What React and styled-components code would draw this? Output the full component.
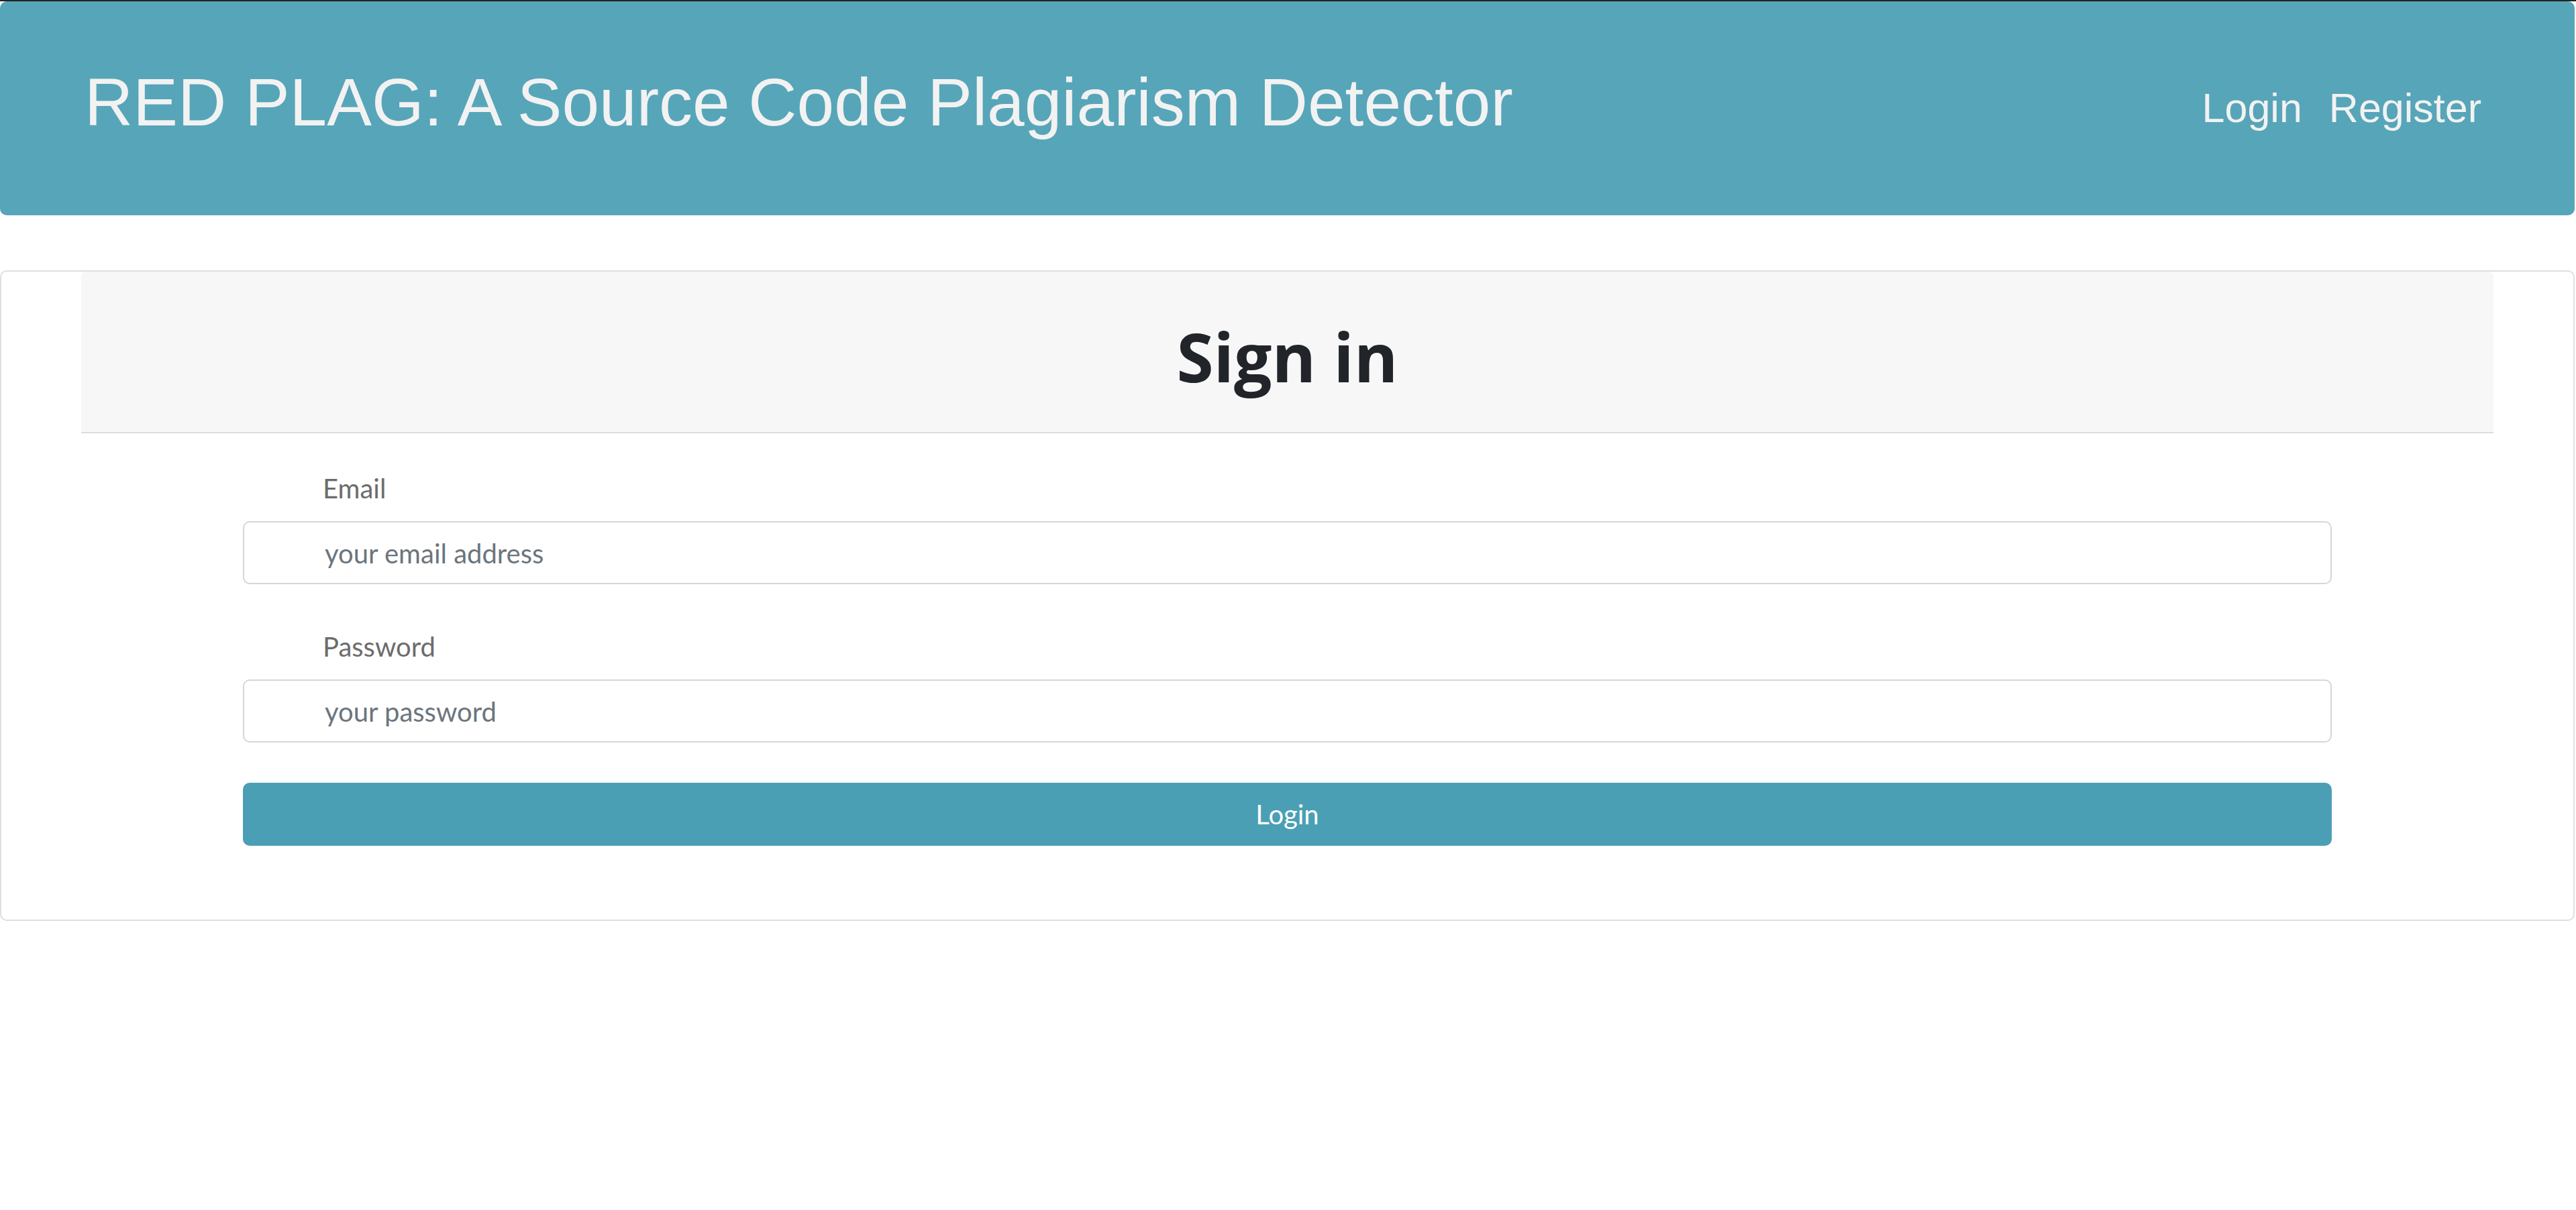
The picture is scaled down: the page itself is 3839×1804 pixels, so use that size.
import React from "react";
import styled, { createGlobalStyle } from "styled-components";

const GlobalStyle = createGlobalStyle`
  html, body {
    margin: 0;
    padding: 0;
    background: #fff;
  }
  * {
    box-sizing: border-box;
  }
`;

const Page = styled.div`
  border-top: 2px solid #222;
  padding-right: 2px;
  min-height: 100vh;
`;

const NavBar = styled.header`
  height: 319px;
  background: #57a5b9;
  border-radius: 10px;
  display: flex;
  align-items: flex-start;
  justify-content: space-between;
  padding: 100px 139px 0 126px;
  font-family: "Liberation Sans", Arial, sans-serif;
  color: #f2f2f2;
`;

const Brand = styled.div`
  font-size: 100px;
  line-height: 100px;
  white-space: nowrap;
`;

const NavLinks = styled.nav`
  display: flex;
  gap: 40px;
  margin-top: 29px;
`;

const NavLink = styled.a`
  font-size: 61px;
  line-height: 61px;
  color: inherit;
  text-decoration: none;
  cursor: pointer;
`;

const Card = styled.section`
  margin-top: 82px;
  border: 2px solid #dfdfdf;
  border-radius: 10px;
  padding: 0 119px 110px;
`;

const CardHeader = styled.div`
  background: #f7f7f7;
  border-bottom: 2px solid #dcdcdc;
  border-radius: 8px 8px 0 0;
  padding: 66px 0 53px;
  text-align: center;
`;

const Title = styled.h1`
  margin: 0;
  font-family: "Open Sans", "Noto Sans", sans-serif;
  font-weight: 700;
  font-size: 100px;
  line-height: 120px;
  color: #212529;
`;

const Form = styled.form`
  padding: 52px 241px 0;
  font-family: Lato, "Open Sans", sans-serif;
`;

const Field = styled.div`
  margin-bottom: ${props => (props.last ? "60px" : "63px")};
`;

const Label = styled.label`
  display: block;
  padding-left: 119px;
  margin-bottom: 19px;
  font-size: 40px;
  line-height: 60px;
  color: #6c6c6c;
`;

const TextInput = styled.input`
  display: block;
  width: 100%;
  height: 94px;
  border: 2px solid #d3d7db;
  border-radius: 10px;
  padding: 2px 20px 0 120px;
  font-family: inherit;
  font-size: 40px;
  color: #495057;
  background: #fff;
  outline: none;

  &::placeholder {
    color: #6c757d;
    opacity: 1;
  }
`;

const SubmitButton = styled.button`
  display: block;
  width: 100%;
  height: 94px;
  border: none;
  border-radius: 10px;
  background: #4b9fb5;
  color: #fff;
  font-family: inherit;
  font-size: 40px;
  cursor: pointer;
`;

const App = () => {
  return (
    <Page>
      <GlobalStyle />
      <NavBar>
        <Brand>RED PLAG: A Source Code Plagiarism Detector</Brand>
        <NavLinks>
          <NavLink>Login</NavLink>
          <NavLink>Register</NavLink>
        </NavLinks>
      </NavBar>
      <Card>
        <CardHeader>
          <Title>Sign in</Title>
        </CardHeader>
        <Form onSubmit={evt => evt.preventDefault()}>
          <Field>
            <Label htmlFor="email">Email</Label>
            <TextInput
              id="email"
              type="email"
              placeholder="your email address"
            />
          </Field>
          <Field last>
            <Label htmlFor="password">Password</Label>
            <TextInput
              id="password"
              type="password"
              placeholder="your password"
            />
          </Field>
          <SubmitButton type="submit">Login</SubmitButton>
        </Form>
      </Card>
    </Page>
  );
};

export default App;
